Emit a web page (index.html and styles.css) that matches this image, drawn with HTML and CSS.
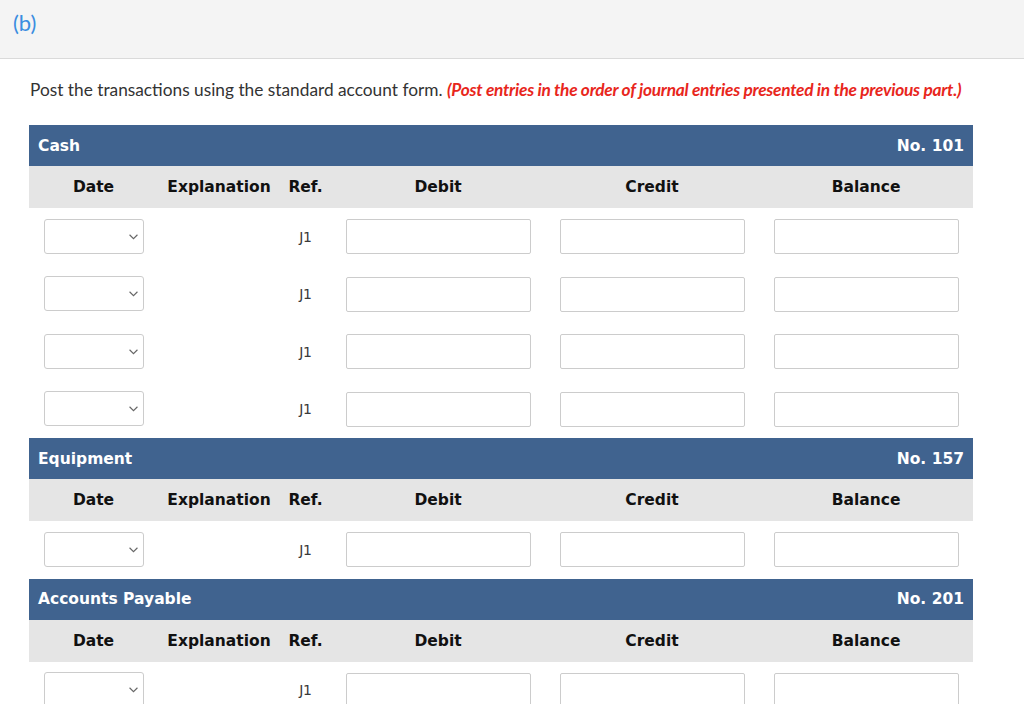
FILE: index.html
```html
<!DOCTYPE html>
<html>
<head>
    <title>Post the transactions</title>
    <link rel="stylesheet" href="styles.css">
</head>
<body>
    <div class="part">(b)</div>
    <div class="content">
        <p class="prompt">Post the transactions using the standard account form. <em>(Post entries in the order of journal entries presented in the previous part.)</em></p>

        <table class="ledger">
            <colgroup>
                <col class="c-date"><col class="c-expl"><col class="c-ref">
                <col class="c-amt"><col class="c-amt"><col class="c-amt">
            </colgroup>
            <tr class="acct"><th colspan="3" class="name">Cash</th><th colspan="3" class="no">No. 101</th></tr>
            <tr class="cols"><th>Date</th><th>Explanation</th><th>Ref.</th><th>Debit</th><th>Credit</th><th>Balance</th></tr>
            <tr><td><div class="sel"><svg viewBox="0 0 8 5"><path d="M0.5 0.5 L4 4 L7.5 0.5"/></svg></div></td><td></td><td class="ref">J1</td><td><input type="text"></td><td><input type="text"></td><td><input type="text"></td></tr>
            <tr><td><div class="sel"><svg viewBox="0 0 8 5"><path d="M0.5 0.5 L4 4 L7.5 0.5"/></svg></div></td><td></td><td class="ref">J1</td><td><input type="text"></td><td><input type="text"></td><td><input type="text"></td></tr>
            <tr><td><div class="sel"><svg viewBox="0 0 8 5"><path d="M0.5 0.5 L4 4 L7.5 0.5"/></svg></div></td><td></td><td class="ref">J1</td><td><input type="text"></td><td><input type="text"></td><td><input type="text"></td></tr>
            <tr><td><div class="sel"><svg viewBox="0 0 8 5"><path d="M0.5 0.5 L4 4 L7.5 0.5"/></svg></div></td><td></td><td class="ref">J1</td><td><input type="text"></td><td><input type="text"></td><td><input type="text"></td></tr>

            <tr class="acct"><th colspan="3" class="name">Equipment</th><th colspan="3" class="no">No. 157</th></tr>
            <tr class="cols"><th>Date</th><th>Explanation</th><th>Ref.</th><th>Debit</th><th>Credit</th><th>Balance</th></tr>
            <tr><td><div class="sel"><svg viewBox="0 0 8 5"><path d="M0.5 0.5 L4 4 L7.5 0.5"/></svg></div></td><td></td><td class="ref">J1</td><td><input type="text"></td><td><input type="text"></td><td><input type="text"></td></tr>

            <tr class="acct"><th colspan="3" class="name">Accounts Payable</th><th colspan="3" class="no">No. 201</th></tr>
            <tr class="cols"><th>Date</th><th>Explanation</th><th>Ref.</th><th>Debit</th><th>Credit</th><th>Balance</th></tr>
            <tr><td><div class="sel"><svg viewBox="0 0 8 5"><path d="M0.5 0.5 L4 4 L7.5 0.5"/></svg></div></td><td></td><td class="ref">J1</td><td><input type="text"></td><td><input type="text"></td><td><input type="text"></td></tr>
        </table>
    </div>
</body>
</html>
```
FILE: styles.css
```css
body {
    margin: 0;
    font-family: Lato, "Open Sans", sans-serif;
    color: #333;
    background: #fff;
}

.part {
    height: 58px;
    background-color: #f4f4f4;
    border-bottom: 1px solid #dadada;
    color: #3b8de0;
    font-size: 22px;
    line-height: 46px;
    padding-left: 13px;
}

.content {
    padding: 0 29px;
}

.prompt {
    margin: 19px 0 23px 1px;
    font-size: 17.3px;
    line-height: 24px;
}

.prompt em {
    color: #e8261c;
    font-weight: bold;
    letter-spacing: -0.25px;
}

.ledger {
    width: 944px;
    border-collapse: collapse;
    table-layout: fixed;
}

.ledger th,
.ledger td {
    font-family: "DejaVu Sans", Verdana, sans-serif;
}

.c-date { width: 129px; }
.c-expl { width: 122px; }
.c-ref { width: 51px; }
.c-amt { width: 214px; }

.acct th {
    background-color: #40638f;
    color: #fff;
    height: 41px;
    padding: 0 9px;
    font-size: 15.5px;
}

.acct .name { text-align: left; }
.acct .no { text-align: right; }

.cols th {
    background-color: #e5e5e5;
    color: #111;
    height: 42px;
    padding: 0;
    font-size: 15.5px;
    text-align: center;
}

.ledger td {
    height: 57.5px;
    padding: 0;
    text-align: center;
}

.ledger .ref {
    font-size: 14px;
    color: #3a3a3a;
    letter-spacing: -0.3px;
}

.sel {
    width: 98px;
    height: 33px;
    margin: 0 auto 1px;
    border: 1px solid #ccc;
    border-radius: 3px;
    position: relative;
}

.sel svg {
    position: absolute;
    right: 5px;
    top: 14px;
    width: 9px;
    height: 6px;
    fill: none;
    stroke: #666;
    stroke-width: 1;
}

input {
    display: block;
    width: 185px;
    height: 35px;
    box-sizing: border-box;
    margin: 0 auto;
    border: 1px solid #ccc;
    border-radius: 2px;
}
```
